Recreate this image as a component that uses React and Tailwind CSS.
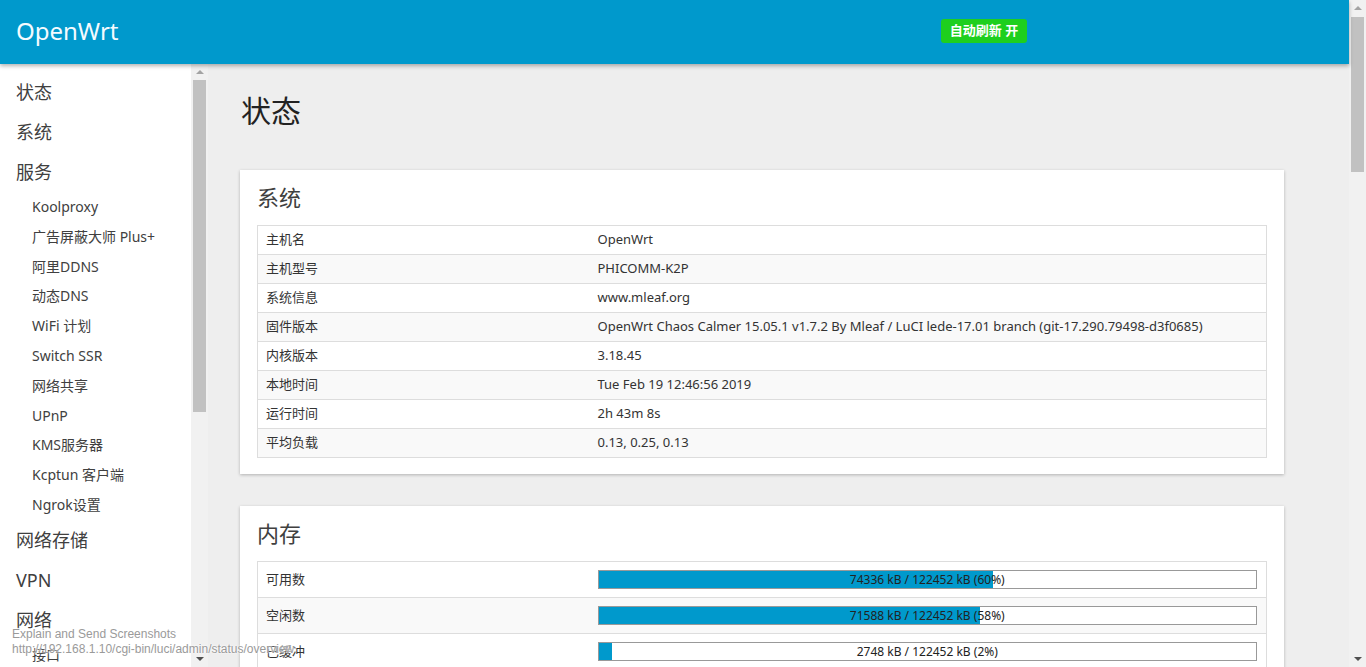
const FONT = "font-['Noto_Sans','Noto_Sans_CJK_SC',sans-serif]";

const menu = [
  { label: '状态', top: true },
  { label: '系统', top: true },
  { label: '服务', top: true },
  { label: 'Koolproxy' },
  { label: '广告屏蔽大师 Plus+' },
  { label: '阿里DDNS' },
  { label: '动态DNS' },
  { label: 'WiFi 计划' },
  { label: 'Switch SSR' },
  { label: '网络共享' },
  { label: 'UPnP' },
  { label: 'KMS服务器' },
  { label: 'Kcptun 客户端' },
  { label: 'Ngrok设置' },
  { label: '网络存储', top: true },
  { label: 'VPN', top: true },
  { label: '网络', top: true },
  { label: '接口' },
];

const system = [
  ['主机名', 'OpenWrt'],
  ['主机型号', 'PHICOMM-K2P'],
  ['系统信息', 'www.mleaf.org'],
  ['固件版本', 'OpenWrt Chaos Calmer 15.05.1 v1.7.2 By Mleaf / LuCI lede-17.01 branch (git-17.290.79498-d3f0685)'],
  ['内核版本', '3.18.45'],
  ['本地时间', 'Tue Feb 19 12:46:56 2019'],
  ['运行时间', '2h 43m 8s'],
  ['平均负载', '0.13, 0.25, 0.13'],
];

const memory = [
  ['可用数', 74336, 60],
  ['空闲数', 71588, 58],
  ['已缓冲', 2748, 2],
];

function Scrollbar({ thumbTop, thumbHeight }) {
  return (
    <div className="relative w-[17px] h-full bg-[#f1f1f1] shrink-0">
      <div className="absolute left-[5px] top-[6px] w-0 h-0 border-l-[4px] border-r-[4px] border-b-[4px] border-l-transparent border-r-transparent border-b-[#a3a3a3]" />
      <div
        className="absolute left-[2px] right-[2px] bg-[#c1c1c1]"
        style={{ top: thumbTop, height: thumbHeight }}
      />
      <div className="absolute left-[5px] bottom-[6px] w-0 h-0 border-l-[4px] border-r-[4px] border-t-[4px] border-l-transparent border-r-transparent border-t-[#505050]" />
    </div>
  );
}

function Card({ title, children }) {
  return (
    <div className="bg-white shadow-[0_1px_3px_rgba(0,0,0,0.25)] px-[17px] pt-[11px] pb-[16px] mb-8">
      <h3 className="text-[22px] leading-[33px] text-[#404040] mb-[11px]">{title}</h3>
      {children}
    </div>
  );
}

export default function App() {
  return (
    <div className={`${FONT} flex h-[667px] w-[1366px] overflow-hidden bg-[#eeeeee] relative`}>
      <div className="flex flex-col flex-1 min-w-0">
        <header className="h-16 shrink-0 bg-[#0099cc] flex items-center px-4 shadow-[0_2px_4px_rgba(0,0,0,0.3)] relative z-10">
          <span className="text-[24px] text-[#f4fbff] w-[925px] -mt-[2px]">OpenWrt</span>
          <span className="bg-[#1ecf1e] text-white font-bold text-[13px] rounded-[3px] h-6 w-[86px] flex items-center justify-center -mt-[2px]">
            自动刷新 开
          </span>
        </header>
        <div className="flex flex-1 min-h-0">
          <nav className="w-[191px] bg-white shrink-0 pt-[8px] pl-4">
            {menu.map((m) =>
              m.top ? (
                <div key={m.label} className="text-[18px] leading-[40px] h-10 text-[#404040]">
                  {m.label}
                </div>
              ) : (
                <div key={m.label} className="text-[14px] leading-[30px] h-[29.8px] pl-4 text-[#404040]">
                  {m.label}
                </div>
              )
            )}
          </nav>
          <Scrollbar thumbTop={16} thumbHeight={332} />
          <main className="flex-1 pl-8 pr-[65px] pt-[29px]">
            <h2 className="text-[30px] leading-[36px] text-[#222] mb-[41px] pl-px">状态</h2>
            <Card title="系统">
              <table className="w-full border border-[#dddddd] border-collapse text-[13px] text-[#333]">
                <tbody>
                  {system.map(([k, v], i) => (
                    <tr key={k} className={`h-[29px] border-t border-[#dddddd] ${i % 2 ? 'bg-[#f9f9f9]' : 'bg-white'}`}>
                      <td className="pl-2 w-[340px]">{k}</td>
                      <td>{v}</td>
                    </tr>
                  ))}
                </tbody>
              </table>
            </Card>
            <Card title="内存">
              <table className="w-full border border-[#dddddd] border-collapse text-[13px] text-[#333]">
                <tbody>
                  {memory.map(([k, n, p], i) => (
                    <tr key={k} className={`h-9 border-t border-[#dddddd] ${i % 2 ? 'bg-[#f9f9f9]' : 'bg-white'}`}>
                      <td className="pl-2 w-[340px]">{k}</td>
                      <td className="pr-[9px]">
                        <div className="relative h-[19px] border border-[#999] bg-white">
                          <div className="h-full bg-[#0099cc]" style={{ width: `${p}%` }} />
                          <div className="absolute inset-0 flex items-center justify-center text-[12px] text-[#222]">
                            {n} kB / 122452 kB ({p}%)
                          </div>
                        </div>
                      </td>
                    </tr>
                  ))}
                </tbody>
              </table>
            </Card>
          </main>
        </div>
      </div>
      <Scrollbar thumbTop={17} thumbHeight={155} />
      <div className="absolute left-3 bottom-[10px] text-[12px] leading-[15px] text-[#9a9a9a] font-['Liberation_Sans',sans-serif] [text-shadow:0_0_2px_#fff,0_0_2px_#fff] pointer-events-none">
        <div>Explain and Send Screenshots</div>
        <div>http://192.168.1.10/cgi-bin/luci/admin/status/overview</div>
      </div>
    </div>
  );
}
